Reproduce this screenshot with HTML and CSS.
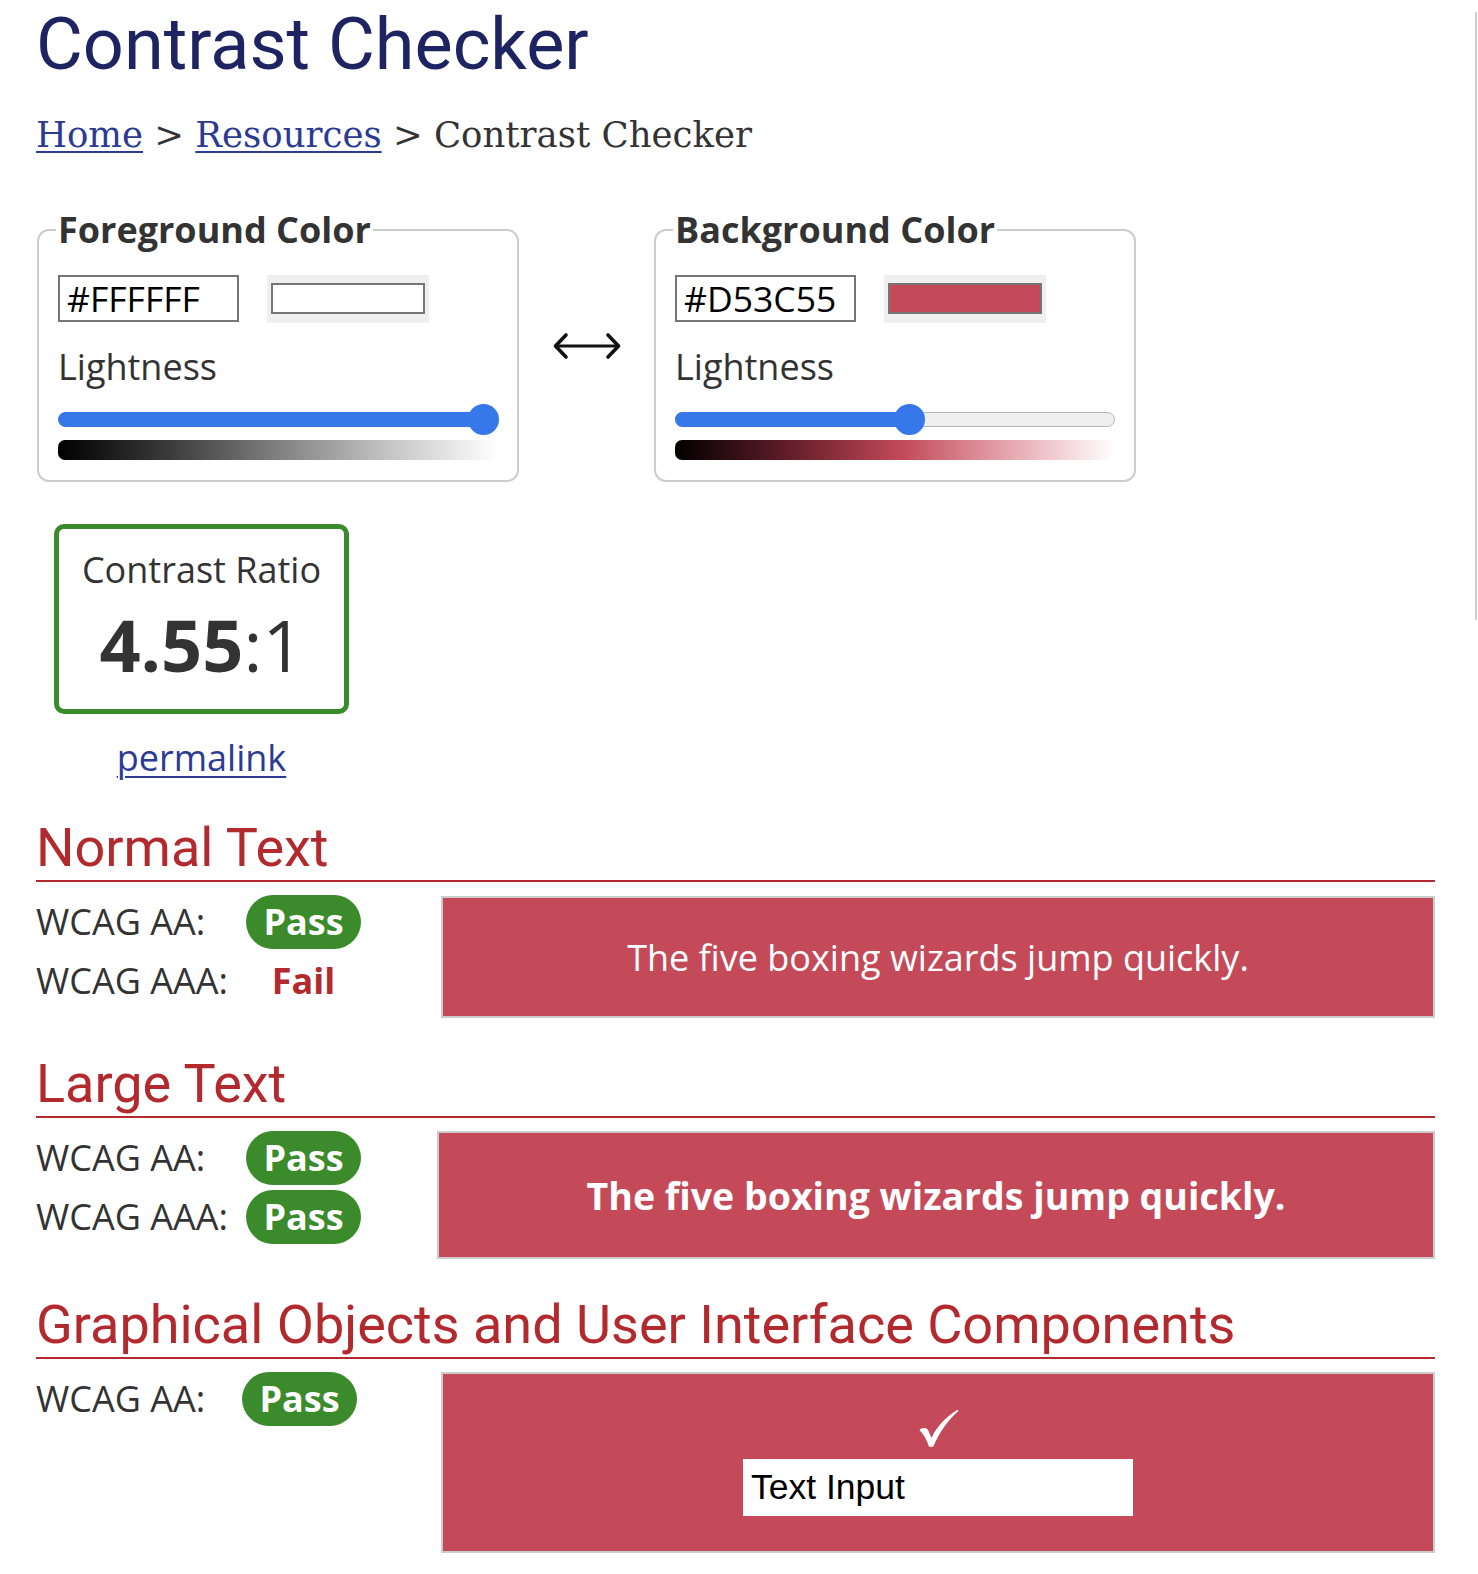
FILE: index.html
```html
<!DOCTYPE html>
<html lang="en">
<head>
<meta charset="utf-8">
<title>Contrast Checker</title>
<link rel="stylesheet" href="styles.css">
</head>
<body>
<div class="edge-line"></div>
<div class="page">
  <h1 class="title">Contrast Checker</h1>
  <nav class="crumbs"><a href="#">Home</a> &gt; <a href="#">Resources</a> &gt; Contrast Checker</nav>

  <div class="pickers">
    <fieldset class="picker">
      <legend>Foreground Color</legend>
      <div class="hexrow">
        <div class="hex">#FFFFFF</div>
        <div class="swatch"><div class="swatch-fill swatch-white"></div></div>
      </div>
      <div class="light-label">Lightness</div>
      <div class="slider">
        <div class="track track-full"></div>
        <div class="thumb" style="left: 410px;"></div>
      </div>
      <div class="grad grad-fg"></div>
    </fieldset>

    <div class="swap">
      <svg width="68" height="30" viewBox="0 0 68 30" aria-hidden="true">
        <path d="M3 15 H65" stroke="#111" stroke-width="3" fill="none"/>
        <path d="M13 4 L2.5 15 L13 26" stroke="#111" stroke-width="3.6" fill="none" stroke-linecap="round" stroke-linejoin="round"/>
        <path d="M55 4 L65.5 15 L55 26" stroke="#111" stroke-width="3.6" fill="none" stroke-linecap="round" stroke-linejoin="round"/>
      </svg>
    </div>

    <fieldset class="picker">
      <legend>Background Color</legend>
      <div class="hexrow">
        <div class="hex">#D53C55</div>
        <div class="swatch"><div class="swatch-fill swatch-red"></div></div>
      </div>
      <div class="light-label">Lightness</div>
      <div class="slider">
        <div class="track track-empty"></div>
        <div class="track-fill" style="width: 235px;"></div>
        <div class="thumb" style="left: 219px;"></div>
      </div>
      <div class="grad grad-bg"></div>
    </fieldset>
  </div>

  <div class="ratio-wrap">
    <div class="ratio">
      <div class="ratio-label">Contrast Ratio</div>
      <div class="ratio-value"><b>4.55</b>:1</div>
    </div>
    <a class="permalink" href="#">permalink</a>
  </div>

  <section class="result">
    <h2 class="result-title">Normal Text</h2>
    <div class="result-body">
      <div class="checks">
        <div class="check-row"><span class="check-label">WCAG AA:</span><span class="badge pass">Pass</span></div>
        <div class="check-row"><span class="check-label">WCAG AAA:</span><span class="badge fail">Fail</span></div>
      </div>
      <div class="sample sample-normal">The five boxing wizards jump quickly.</div>
    </div>
  </section>

  <section class="result">
    <h2 class="result-title">Large Text</h2>
    <div class="result-body result-body-large">
      <div class="checks">
        <div class="check-row"><span class="check-label">WCAG AA:</span><span class="badge pass">Pass</span></div>
        <div class="check-row"><span class="check-label">WCAG AAA:</span><span class="badge pass">Pass</span></div>
      </div>
      <div class="sample sample-large">The five boxing wizards jump quickly.</div>
    </div>
  </section>

  <section class="result">
    <h2 class="result-title">Graphical Objects and User Interface Components</h2>
    <div class="result-body result-body-graph">
      <div class="checks">
        <div class="check-row"><span class="check-label">WCAG AA:</span><span class="badge pass">Pass</span></div>
      </div>
      <div class="sample sample-graph">
        <svg class="tick" width="40" height="38" viewBox="0 0 40 38" aria-label="check mark">
          <path d="M0.5 21 C3 18.5 7 18.3 9 21 L12.6 29 C18 17 27 8 38.5 0.8 L39.5 2 C29 11 20.5 23 14.2 37.8 L10 37.8 C8 31 4.5 25.5 0.5 21 Z" fill="#ffffff"/>
        </svg>
        <div class="text-input">Text Input</div>
      </div>
    </div>
  </section>
</div>
</body>
</html>
```

FILE: styles.css
```css
html, body {
  margin: 0;
  padding: 0;
  background: #ffffff;
}

body {
  font-family: "Open Sans", "Noto Sans", sans-serif;
  font-size: 36px;
  color: #333333;
}

.edge-line {
  position: fixed;
  right: 1px;
  top: 12px;
  width: 2px;
  height: 608px;
  background: #cccccc;
}

.page {
  padding: 0 43px 0 36px;
}

.title {
  margin: 2px 0 0 0;
  font-family: Roboto, "Liberation Sans", sans-serif;
  font-weight: 400;
  font-size: 72px;
  line-height: 86px;
  color: #1e2461;
}

.crumbs {
  margin-top: 23px;
  font-family: "DejaVu Serif", "Liberation Serif", serif;
  font-size: 35.5px;
  line-height: 48px;
  color: #333333;
}

.crumbs a {
  color: #2b3a93;
  text-decoration: underline;
  text-decoration-thickness: 2px;
  text-underline-offset: 4px;
}

/* pickers */
.pickers {
  display: flex;
  align-items: center;
  margin-top: 47px;
  padding-left: 1px;
}

.picker {
  box-sizing: border-box;
  width: 482px;
  margin: 0;
  padding: 21px 19px 20px 19px;
  border: 2px solid #cccccc;
  border-radius: 12px;
  min-inline-size: 0;
}

.picker legend {
  padding: 0 2px;
  margin-left: -2px;
  font-weight: 700;
  font-size: 36px;
  line-height: 48px;
  color: #333333;
}

.hexrow {
  display: flex;
  align-items: flex-start;
  gap: 28px;
}

.hex {
  box-sizing: border-box;
  width: 181px;
  height: 47px;
  border: 2px solid #767676;
  padding-left: 7px;
  font-size: 35.5px;
  line-height: 43px;
  color: #000000;
}

.swatch {
  box-sizing: border-box;
  width: 162px;
  height: 48px;
  padding: 8px 4px 9px 4px;
  background: #efefef;
}

.swatch-fill {
  box-sizing: border-box;
  width: 154px;
  height: 31px;
  border: 2px solid #767676;
}

.swatch-white { background: #ffffff; }
.swatch-red { background: #c44a59; }

.light-label {
  margin-top: 20px;
  line-height: 48px;
  color: #333333;
}

.slider {
  position: relative;
  margin-top: 13px;
  height: 31px;
}

.track {
  box-sizing: border-box;
  position: absolute;
  left: 0;
  right: 0;
  top: 8px;
  height: 15px;
  border-radius: 8px;
}

.track-full {
  background: #3677ea;
}

.track-empty {
  background: #efefef;
  border: 1.5px solid #b5b5b5;
}

.track-fill {
  position: absolute;
  left: 0;
  top: 8px;
  height: 15px;
  border-radius: 8px 0 0 8px;
  background: #3677ea;
}

.thumb {
  position: absolute;
  top: 0;
  width: 31px;
  height: 31px;
  border-radius: 50%;
  background: #3677ea;
}

.grad {
  margin-top: 5px;
  height: 20px;
  border-radius: 7px 0 0 7px;
}

.grad-fg {
  background: linear-gradient(to right, #000000 0%, #3a3a3a 25%, #808080 50%, #c4c4c4 75%, #ffffff 100%);
}

.grad-bg {
  background: linear-gradient(to right, #000000 0%, #5f1c27 25%, #c44a59 52%, #e6a7b0 76%, #ffffff 100%);
}

.swap {
  width: 135px;
  display: flex;
  justify-content: center;
  align-items: center;
  padding-top: 4px;
}

/* ratio */
.ratio-wrap {
  width: 295px;
  margin: 42px 0 0 18px;
  display: flex;
  flex-direction: column;
  align-items: center;
}

.ratio {
  box-sizing: border-box;
  width: 295px;
  height: 190px;
  border: 5px solid #3b8a2c;
  border-radius: 10px;
  padding-top: 17px;
  text-align: center;
}

.ratio-label {
  line-height: 48px;
  color: #333333;
}

.ratio-value {
  margin-top: 5px;
  font-size: 72px;
  line-height: 90px;
  color: #333333;
}

.ratio-value b {
  font-weight: 700;
}

.permalink {
  margin-top: 20px;
  line-height: 48px;
  color: #2b3a93;
  text-decoration: underline;
  text-decoration-thickness: 2px;
  text-underline-offset: 5px;
}

/* results */
.result {
  margin-top: 34px;
}

.result-title {
  margin: 0;
  font-family: Roboto, "Liberation Sans", sans-serif;
  font-weight: 400;
  font-size: 54px;
  line-height: 64px;
  color: #b2292e;
  border-bottom: 2px solid #b2292e;
}

.result-body {
  display: grid;
  grid-template-columns: 405px 1fr;
  align-items: start;
  margin-top: 13px;
}

.result-body-large {
  grid-template-columns: 401px 1fr;
}

.checks {
  display: flex;
  flex-direction: column;
  gap: 5px;
}

.check-row {
  display: grid;
  grid-template-columns: 210px 115px;
  align-items: center;
  height: 54px;
}

.result-body-graph .check-row {
  grid-template-columns: 206px 115px;
}

.check-label {
  line-height: 54px;
  color: #333333;
}

.badge {
  height: 54px;
  line-height: 54px;
  text-align: center;
  font-weight: 700;
  border-radius: 27px;
}

.pass {
  background: #3b8a2c;
  color: #ffffff;
}

.fail {
  color: #b2292e;
}

.sample {
  box-sizing: border-box;
  background: #c44a59;
  border: 2px solid #cccccc;
  color: #ffffff;
  display: flex;
  justify-content: center;
  align-items: center;
  text-align: center;
}

.sample-normal {
  height: 122px;
  margin-top: 1px;
}

.sample-large {
  height: 128px;
  font-weight: 700;
  font-size: 37.5px;
}

.sample-graph {
  height: 181px;
  flex-direction: column;
  gap: 12px;
}

.tick {
  display: block;
  margin-left: 2px;
}

.text-input {
  box-sizing: border-box;
  width: 390px;
  height: 57px;
  background: #ffffff;
  color: #000000;
  font-family: "Liberation Sans", Arial, sans-serif;
  font-size: 35.5px;
  line-height: 57px;
  padding-left: 8px;
  text-align: left;
}
```
